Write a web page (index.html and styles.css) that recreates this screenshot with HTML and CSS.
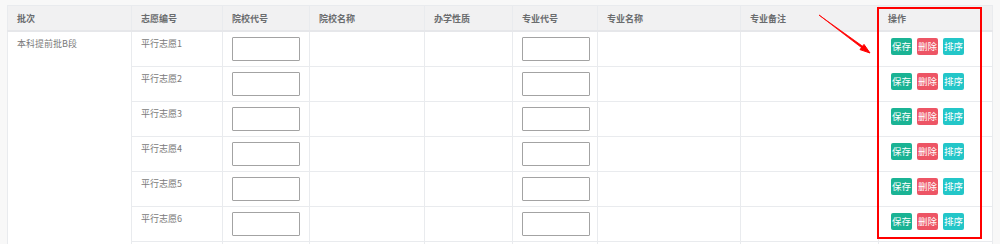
FILE: index.html
```html
<!DOCTYPE html>
<html lang="zh-CN">
<head>
    <meta charset="UTF-8">
    <title>志愿填报</title>
    <link rel="stylesheet" href="styles.css">
</head>
<body>

<div class="page">
    <table class="wish-table">
        <colgroup>
            <col style="width:124px">
            <col style="width:91px">
            <col style="width:87px">
            <col style="width:115px">
            <col style="width:88px">
            <col style="width:85px">
            <col style="width:143px">
            <col style="width:138px">
            <col style="width:114px">
        </colgroup>
        <thead>
            <tr>
                <th>批次</th>
                <th>志愿编号</th>
                <th>院校代号</th>
                <th>院校名称</th>
                <th>办学性质</th>
                <th>专业代号</th>
                <th>专业名称</th>
                <th>专业备注</th>
                <th>操作</th>
            </tr>
        </thead>
        <tbody id="rows"></tbody>
    </table>

    <!-- annotation: red frame round the action column and the arrow pointing at it -->
    <div class="mark-box"></div>
    <svg class="mark-arrow" width="60" height="50" viewBox="0 0 60 50">
        <path d="M1 2 L10 8.5 L45 33.5 L44 35 Z" fill="#f00" stroke="#f00" stroke-width="0.8" stroke-linejoin="round"/>
        <path d="M52 40 L42 36.6 L46 31.4 Z" fill="#f00" stroke="#f00" stroke-width="1" stroke-linejoin="round"/>
    </svg>
</div>

<script>
    // build the wish rows, the batch cell spans all of them
    const rows = document.getElementById('rows');
    const count = 7;
    for (let i = 1; i <= count; i++) {
        const tr = document.createElement('tr');
        // the last row only peeks in at the bottom edge, leave it empty
        const last = i === count;
        tr.innerHTML = `
            ${i === 1 ? `<td rowspan="${count}">本科提前批B段</td>` : ''}
            <td>${last ? '' : '平行志愿' + i}</td>
            <td>${last ? '' : '<input type="text" class="code-input">'}</td>
            <td></td>
            <td></td>
            <td>${last ? '' : '<input type="text" class="code-input">'}</td>
            <td></td>
            <td></td>
            <td class="ops">${last ? '' : `
                <span class="btn btn-save">保存</span>
                <span class="btn btn-del">删除</span>
                <span class="btn btn-sort">排序</span>`}
            </td>
        `;
        rows.appendChild(tr);
    }
</script>

</body>
</html>
```

FILE: styles.css
```css
body {
    margin: 0;
    background-color: #f8f8f8;
    font-family: "Noto Sans CJK SC", "Liberation Sans", sans-serif;
}

.page {
    position: relative;
    padding: 5px 0 0 7px;
}

.wish-table {
    width: 985px;
    border-collapse: collapse;
    table-layout: fixed;
    background-color: #fff;
}

.wish-table th, .wish-table td {
    border: 1px solid #e9ebee;
    text-align: left;
    vertical-align: top;
}

.wish-table th {
    height: 24px;
    padding: 0 9px;
    background-color: #f1f1f2;
    border-bottom: 2px solid #e6e7ea;
    color: #6a6c6e;
    font-size: 9px;
    font-weight: bold;
    vertical-align: middle;
}

.wish-table td {
    height: 35px;
    padding: 5px 9px 0;
    box-sizing: border-box;
    color: #7a7a7a;
    font-size: 9px;
}

.code-input {
    display: block;
    width: 68px;
    height: 24px;
    box-sizing: border-box;
    margin: 0;
    border: 1px solid #a3a3a3;
    border-radius: 1px;
    background: #fff;
}

.ops {
    padding-left: 12px !important;
    padding-top: 6px !important;
    white-space: nowrap;
    font-size: 0;
}

.btn {
    display: inline-block;
    width: 21px;
    height: 17px;
    margin-right: 3px;
    border-radius: 2px;
    color: #fff;
    font-size: 9.5px;
    line-height: 17px;
    text-align: center;
}

.btn-save {
    background-color: #1ab394;
}

.btn-del {
    background-color: #ed5565;
}

.btn-sort {
    background-color: #23c6c8;
}

.mark-box {
    position: absolute;
    left: 877px;
    top: 7px;
    width: 101px;
    height: 228px;
    border: 2px solid #f00;
}

.mark-arrow {
    position: absolute;
    left: 818px;
    top: 13px;
}
```
